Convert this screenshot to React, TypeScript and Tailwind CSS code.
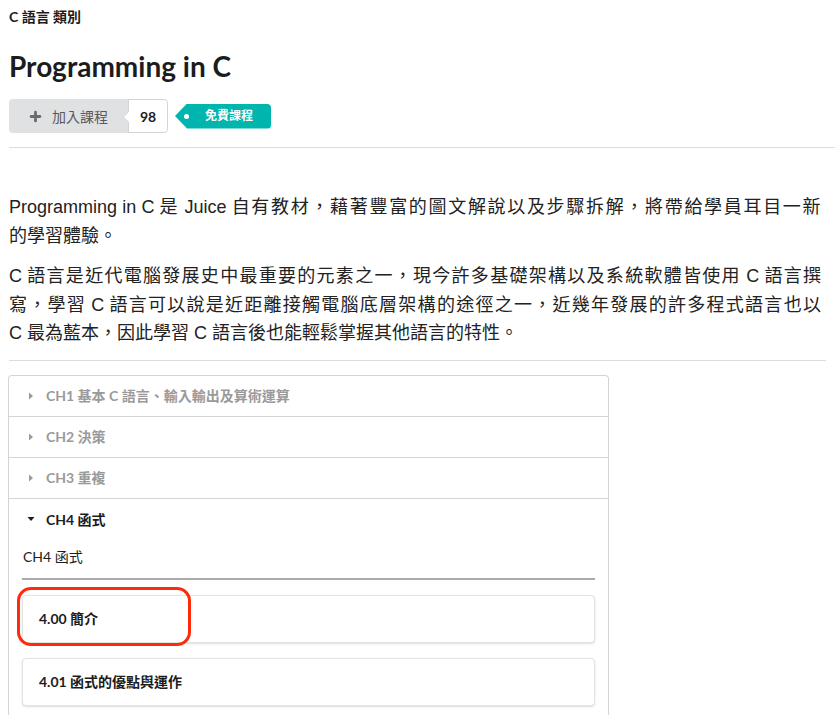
import { Plus } from "lucide-react";

const sans = "font-['Lato','Noto_Sans_CJK_TC',sans-serif]";
const body = "font-['Liberation_Sans','Noto_Sans_CJK_TC',sans-serif]";

const chapters = ["CH1 基本 C 語言、輸入輸出及算術運算", "CH2 決策", "CH3 重複"];

// description lines; CJK runs get a little extra spacing, like the justified original
const intro = [
  [
    { text: "Programming in C 是 Juice 自有教材，藉著豐富的圖文解說以及步驟拆解，將帶給學員耳目一新", track: "tracking-[1.5px]" },
    { text: "的學習體驗。", track: "" },
  ],
  [
    { text: "C 語言是近代電腦發展史中最重要的元素之一，現今許多基礎架構以及系統軟體皆使用 C 語言撰", track: "tracking-[1px]" },
    { text: "寫，學習 C 語言可以說是近距離接觸電腦底層架構的途徑之一，近幾年發展的許多程式語言也以", track: "tracking-[1.1px]" },
    { text: "C 最為藍本，因此學習 C 語言後也能輕鬆掌握其他語言的特性。", track: "" },
  ],
];

const cjk = /([\u3000-\u303f\u3400-\u9fff\uff00-\uffef]+)/;

function Line({ text, track }: { text: string; track: string }) {
  return (
    <span className={`block ${track ? "whitespace-nowrap text-justify [text-align-last:justify]" : ""}`}>
      {text.split(cjk).map((part, k) =>
        cjk.test(part) && track ? (
          <span key={k} className={track}>
            {part}
          </span>
        ) : (
          part
        )
      )}
    </span>
  );
}

function Caret({ open }: { open?: boolean }) {
  return (
    <svg width="8" height="8" viewBox="0 0 8 8" className={open ? "text-[#1b1c1d]" : "text-[#9a9a9a]"}>
      {open ? <path d="M0.5 2 L7.5 2 L4 6 Z" fill="currentColor" /> : <path d="M2 0.5 L6 4 L2 7.5 Z" fill="currentColor" />}
    </svg>
  );
}

function LessonCard({ title }: { title: string }) {
  return (
    <div className="h-[48px] rounded-[4px] border border-[#e3e3e4] bg-white shadow-[0_1px_2px_rgba(34,36,38,0.15)] flex items-center pl-[16px] text-[14px] font-bold text-[#1b1c1d]">
      {title}
    </div>
  );
}

export default function App() {
  return (
    <div lang="zh-Hant" className={`${sans} bg-white min-h-[715px] pl-[9px] pt-[8px] text-[#1b1c1d] overflow-hidden`}>
      {/* breadcrumb */}
      <div className="text-[14px] leading-[18px] font-bold">C 語言 類別</div>

      <h1 className="mt-[23px] text-[28px] leading-[34px] font-bold">Programming in C</h1>

      {/* buttons */}
      <div className="mt-[16px] flex items-center h-[34px]">
        <div className="h-[34px] w-[119px] rounded-l-[4px] bg-[#e0e1e2] flex items-center pl-[19px] gap-[9px] text-[#5a5a5a] text-[14px]">
          <Plus size={15} strokeWidth={4.5} className="text-[#6b6b6b]" />
          <span>加入課程</span>
        </div>
        <div className="relative h-[34px] w-[40px] bg-white border border-[#d4d4d5] rounded-r-[4px] flex items-center justify-center text-[14px] font-bold">
          <span className="absolute left-[-5px] top-[13px] w-[8px] h-[8px] bg-white border-l border-b border-[#d4d4d5] rotate-45" />
          98
        </div>
        <div className="ml-[7px] h-[25px] w-[96px] rounded-r-[4px] bg-[#00b5ad] [clip-path:polygon(12px_0,100%_0,100%_100%,12px_100%,0_50%)] flex items-center text-white text-[12px] font-bold">
          <span className="ml-[9px] w-[5px] h-[5px] rounded-full bg-white" />
          <span className="ml-[16px]">免費課程</span>
        </div>
      </div>

      <div className="mt-[14px] border-t border-[#dcdcdc]" />

      {/* description */}
      <div className={`${body} text-[18px] leading-[28.5px] text-[#222] w-[813px]`}>
        {intro.map((para, i) => (
          <p key={i} className={i === 0 ? "mt-[45px]" : "mt-[12px]"}>
            {para.map((line, j) => (
              <Line key={j} text={line.text} track={line.track} />
            ))}
          </p>
        ))}
      </div>

      <div className="mt-[12px] mr-[9px] border-t border-[#dcdcdc]" />

      {/* accordion */}
      <div className="relative mt-[14px] ml-[-1px] w-[601px] rounded-t-[4px] border-x border-t border-[#d4d4d5]">
        {chapters.map((c) => (
          <div key={c} className="h-[41px] border-b border-[#d4d4d5] flex items-center pl-[18px] gap-[11px] text-[14px] font-bold text-[#9a9a9a]">
            <Caret />
            <span>{c}</span>
          </div>
        ))}
        <div className="h-[41px] flex items-center pl-[18px] gap-[11px] text-[14px] font-bold">
          <Caret open />
          <span>CH4 函式</span>
        </div>
        <div className="px-[13px]">
          <div className="text-[14px] leading-[18px] pl-[1px] mt-[8px]">CH4 函式</div>
          <div className="mt-[12px] border-t-2 border-[#aaaaaa]" />
          <div className="mt-[15px] flex flex-col gap-[15px] pb-[20px]">
            <LessonCard title="4.00 簡介" />
            <LessonCard title="4.01 函式的優點與運作" />
          </div>
        </div>
        {/* highlight */}
        <div className="absolute left-[8px] top-[211px] w-[174px] h-[59px] rounded-[14px] border-[3px] border-[#ff2a0a]" />
      </div>
    </div>
  );
}
